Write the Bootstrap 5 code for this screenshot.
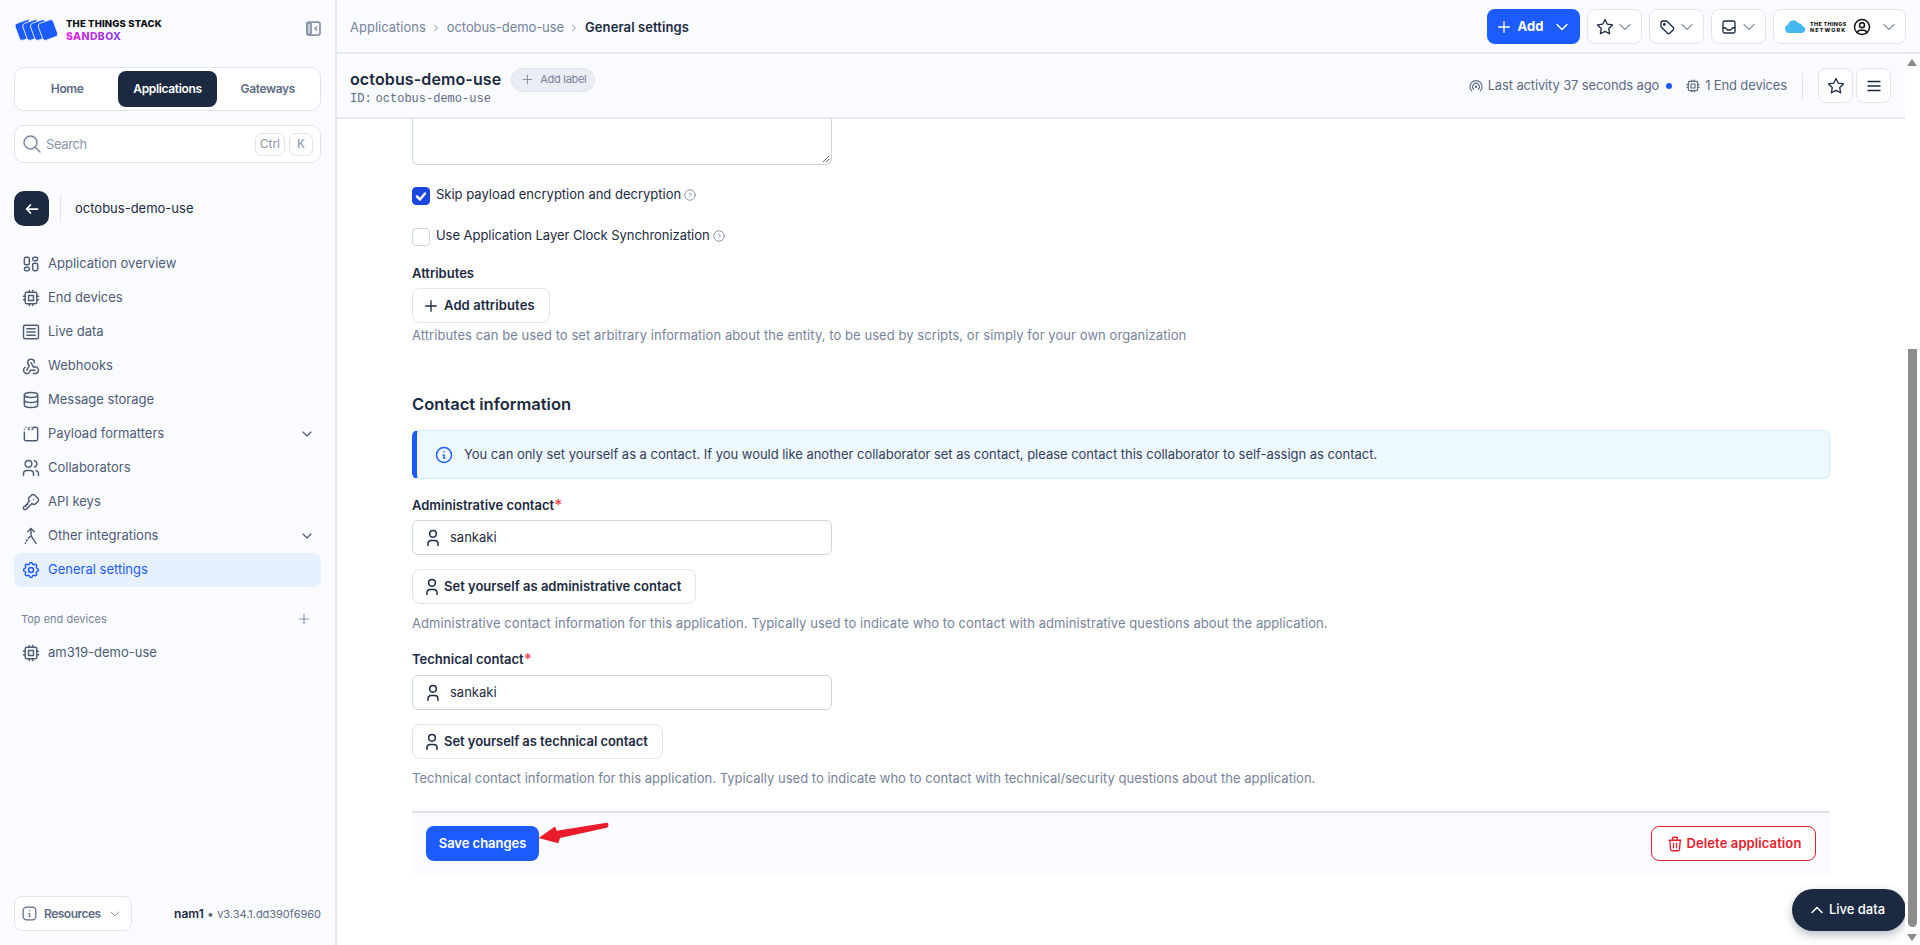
<!DOCTYPE html>
<html lang="en">
<head>
<meta charset="utf-8">
<title>General settings</title>
<link href="https://cdn.jsdelivr.net/npm/bootstrap@5.3.0/dist/css/bootstrap.min.css" rel="stylesheet">
<style>
html,body{height:945px;overflow:hidden}
body{font-family:Inter,"Liberation Sans",sans-serif;font-size:13px;color:#1c2a41;background:#fff}
svg.ic{fill:none;stroke:currentColor;stroke-width:1.75;stroke-linecap:round;stroke-linejoin:round;flex:none}
svg.ic.tts-thin{stroke-width:1.4}
.tts-shell{height:945px}
.tts-side{width:337px;flex:none;background:#fafbfe;border-right:2px solid #e6e9f0;padding:0 14px;height:945px}
.tts-brand{height:53px;padding-top:19px;margin-bottom:14px}
.tts-logo{flex:none}
.tts-brandtext{font-weight:800;font-size:9.5px;line-height:13px;letter-spacing:.17px;color:#0b0b0f;margin-left:6px;margin-top:-2px}
.tts-sandbox{display:block;background:linear-gradient(90deg,#e21be0,#3f5cf2);-webkit-background-clip:text;background-clip:text;color:transparent;font-size:10.5px;letter-spacing:.35px}
.tts-collapse{color:#8a95a8;margin-top:2px}
.tts-tabs{border:1px solid #e0e4ec;border-radius:10px;background:#fff;height:44px;padding:3px;gap:2px}
.tts-tab{flex:1 1 0;border-radius:8px;font-weight:600;font-size:12px;letter-spacing:-.35px;color:#5d6b85;text-decoration:none;display:flex;align-items:center;justify-content:center}
.tts-tab-on{background:#1c2a41;color:#fff}
.tts-search{height:38px;border:1px solid #e0e4ec;border-radius:10px;background:#fff;margin-top:14px;padding:0 7px 0 8px;color:#76839a}
.tts-searchtext{letter-spacing:-.4px;padding-top:1px;margin-left:5px;color:#8a95a8}
.tts-kbd{height:23px;border:1px solid #dfe3eb;border-radius:7px;font-size:12px;padding:0 4px;min-width:24px;display:flex;align-items:center;justify-content:center;color:#8a95a8;background:#fff}
.tts-back{width:35px;height:35px;border-radius:10px;background:#1c2a41;color:#fff;display:flex;align-items:center;justify-content:center}
.tts-appname{height:35px;margin-top:28px;margin-bottom:21px}
.tts-vr{width:1px;height:26px;background:#e0e4ec;margin:0 14px 0 11px}
.tts-link{display:flex;align-items:center;height:34px;border-radius:8px;padding:0 6px 0 7px;color:#4e5c76;text-decoration:none;gap:7px;font-size:13px}
.tts-link-on{background:#e7f0ff;color:#1c5cff}
.tts-sect{color:#76839a;font-size:11px;padding:0 9px 0 7px;margin-top:15px;height:34px}
.tts-res{height:35px;width:118px;border:1px solid #e0e4ec;border-radius:8px;background:#fff;font-weight:600;font-size:12px;letter-spacing:-.5px;gap:6px;padding:0 8px 0 6px}
.tts-foot{margin-top:auto;margin-bottom:14px;font-size:12px;color:#5d6b85}
.tts-ver{font-size:11px;letter-spacing:-.04px}
.tts-top{height:54px;background:#fafbfe;border-bottom:2px solid #e6e9f0;padding:1px 14px 0 13px}
.tts-crumbs{gap:4.5px;margin-top:2px}
.tts-crumb{color:#76839a;text-decoration:none;font-size:13px}
.tts-crumb-mid{letter-spacing:-.08px}
.tts-crumb-now{letter-spacing:.1px;font-weight:600}
.tts-tool{height:35px;width:55px;background:#fff;border:1px solid #e0e4ec;border-radius:8px;gap:1px;padding:0 0 0 8px;color:#1c2a41}
.tts-tool .tts-chev{color:#8a95a8}
.tts-ttn{width:133px;padding:0 6px 0 10px;gap:3px}
.tts-ttntext{font-weight:800;font-size:5.4px;line-height:6px;letter-spacing:.35px;color:#111;width:37px;flex:none}
.tts-ttntext span{letter-spacing:1.15px}
.tts-add{height:35px;width:93px;border-radius:8px;background:#1c5cff;color:#fff;border:0;font-weight:700;font-size:13px;gap:5px}
.tts-sub{height:65px;background:#fafbfe;border-bottom:2px solid #e6e9f0;padding:0 14px 0 13px}
.tts-title{font-size:16px;font-weight:600;letter-spacing:.12px;line-height:21px;color:#1c2a41;padding-top:1px}
.tts-idline{font-family:"Liberation Mono",monospace;font-size:12px;line-height:14px;color:#5d6b85}
.tts-pill{height:24px;width:84px;border-radius:12px;background:#eaedf3;border:1px solid #e0e4ec;color:#76839a;font-size:11px;letter-spacing:-.3px;padding:0 0 0 8px;gap:5px;margin-left:10px;margin-top:2px}
.tts-meta{color:#5d6b85;font-size:13px;letter-spacing:-.14px}
.tts-dot{width:6px;height:6px;border-radius:50%;background:#1c5cff;display:inline-block;margin:0 13px 0 7px}
.tts-sq{width:35px;height:35px;background:#fff;border:1px solid #e0e4ec;border-radius:8px;padding:0;color:#1c2a41;display:flex;align-items:center;justify-content:center}
.tts-scroll{flex:1 1 0;min-height:0;padding:0 75px;position:relative}
.tts-area{height:46px;width:420px;border:1px solid #ced4e0;border-top:0;border-radius:0 0 6px 6px;position:relative}
.tts-grip{position:absolute;right:1px;bottom:1px}
.tts-check{width:18px;height:18px;border:1px solid #ced4e0;border-radius:4px;background:#fff;flex:none;margin-right:6px;display:flex;align-items:center;justify-content:center}
.tts-check-on{background:#1c46e0;border-color:#1c46e0;color:#fff}
.tts-checkrow{height:18px;line-height:15px;color:#1c2a41}
.tts-tight{letter-spacing:-.05px}
.tts-help{color:#76839a;margin-left:2px;margin-top:1px}
.tts-lab{font-weight:600;line-height:18px;color:#1c2a41}
.tts-btn{height:35px;background:#fff;border:1px solid #e0e4ec;border-radius:8px;font-weight:600;font-size:13px;color:#1c2a41;padding:0 14px 0 9px;gap:2px}
.tts-btn-add{gap:4px;letter-spacing:.12px}
.tts-btn-tech{letter-spacing:-.05px}
.tts-desc{color:#76839a;line-height:18px;font-size:13px;letter-spacing:.066px}
.tts-desc-b{letter-spacing:.016px}
.tts-h{font-size:16.5px;font-weight:600;line-height:22px;color:#1c2a41}
.tts-note{height:49px;background:#edf8ff;border:1px solid #cfeeff;border-left:5px solid #1c5cff;border-radius:6px;padding-left:17px;gap:10px;color:#33415a;letter-spacing:-.03px}
.tts-input{width:420px;height:35px;border:1px solid #ced4e0;border-radius:6px;padding:0 10px;gap:7px;background:#fff}
.tts-req{color:#f0485a;font-size:15px;line-height:1}
.tts-bar{height:63px;background:#fafbfe;border-top:2px solid #dfe1e7;padding:0 14px;margin-top:24px}
.tts-save{height:35px;width:113px;border:0;border-radius:8px;background:#1c5cff;color:#fff;font-weight:600;font-size:13px;letter-spacing:-.04px;padding-top:2px}
.tts-del{height:35px;width:165px;background:#fff;border:1px solid #e4202c;border-radius:8px;color:#e4202c;font-weight:600;font-size:13px;letter-spacing:.1px;gap:3px}
.tts-arrow{position:absolute;left:201px;top:703px}
.tts-live{position:absolute;right:-1px;bottom:14px;height:42px;width:114px;border:0;border-radius:21px;background:#1c2a41;color:#fff;font-size:13px;font-weight:500;gap:2px;padding:0 6px 0 0;box-shadow:0 4px 10px rgba(28,42,65,.3)}
.tts-bartrack{width:15px;flex:none;background:#fff;position:relative}
.tts-thumb{position:absolute;left:3px;width:9px;top:295px;height:578px;background:#8c8c8c;border-radius:0 0 5px 5px}
.tts-up,.tts-down{position:absolute;left:2px;width:0;height:0;border-left:5.5px solid transparent;border-right:5.5px solid transparent}
.tts-up{top:5px;border-bottom:7px solid #8c8c8c}
.tts-down{bottom:4px;border-top:7px solid #8c8c8c}
</style>
</head>
<body>
<svg width="0" height="0" class="position-absolute">
<defs>
<symbol id="i-cpu" viewBox="0 0 24 24"><rect x="5" y="5" width="14" height="14" rx="2"/><rect x="9" y="9" width="6" height="6"/><path d="M3 10h2M3 14h2M10 3v2M14 3v2M21 10h-2M21 14h-2M14 21v-2M10 21v-2"/></symbol>
<symbol id="i-layout" viewBox="0 0 24 24"><rect x="4" y="4" width="6" height="9" rx="2"/><rect x="4" y="16" width="6" height="4" rx="2"/><rect x="14" y="4" width="6" height="4" rx="2"/><rect x="14" y="11" width="6" height="9" rx="2"/></symbol>
<symbol id="i-article" viewBox="0 0 24 24"><rect x="3" y="4" width="18" height="16" rx="2"/><path d="M7 8h10M7 12h10M7 16h10"/></symbol>
<symbol id="i-hook" viewBox="0 0 24 24"><path d="M4.876 13.61a4 4 0 1 0 6.124 3.39h6"/><path d="M15.066 20.502a4 4 0 1 0 1.934 -7.502c-.706 0 -1.424 .179 -2 .5l-3 -5.5"/><path d="M16 8a4 4 0 1 0 -8 0c0 1.506 .77 2.818 2 3.5l-3 5.5"/></symbol>
<symbol id="i-db" viewBox="0 0 24 24"><ellipse cx="12" cy="6" rx="8" ry="3"/><path d="M4 6v6a8 3 0 0 0 16 0v-6"/><path d="M4 12v6a8 3 0 0 0 16 0v-6"/></symbol>
<symbol id="i-code" viewBox="0 0 24 24"><path d="M4 10v8a2 2 0 0 0 2 2h12a2 2 0 0 0 2 -2v-12a2 2 0 0 0 -2 -2h-3"/><path d="M6 4h-.01M4 6.500h-.01"/><path d="M10 4l-1.500 1.500l1.500 1.500M13 4l1.500 1.500l-1.500 1.500" stroke-width="1.400"/></symbol>
<symbol id="i-users" viewBox="0 0 24 24"><circle cx="9" cy="7" r="4"/><path d="M3 21v-2a4 4 0 0 1 4 -4h4a4 4 0 0 1 4 4v2"/><path d="M16 3.130a4 4 0 0 1 0 7.750"/><path d="M21 21v-2a4 4 0 0 0 -3 -3.850"/></symbol>
<symbol id="i-key" viewBox="0 0 24 24"><path d="M16.555 3.843l3.602 3.602a2.877 2.877 0 0 1 0 4.069l-2.643 2.643a2.877 2.877 0 0 1 -4.069 0l-.301 -.301l-6.558 6.558a2 2 0 0 1 -1.239 .578l-.175 .008h-1.172a1 1 0 0 1 -.993 -.883l-.007 -.117v-1.172a2 2 0 0 1 .467 -1.284l.119 -.13l.414 -.414h2v-2h2v-2l2.144 -2.144l-.301 -.301a2.877 2.877 0 0 1 0 -4.069l2.643 -2.643a2.877 2.877 0 0 1 4.069 0z"/><path d="M15 9h.01"/></symbol>
<symbol id="i-merge" viewBox="0 0 24 24"><path d="M8 7l4 -4l4 4"/><path d="M12 3v7c0 4 4 6 6 11"/><path d="M11 12.500l-2 2M7.500 16.500l-1 1.500M5.500 20.500l-.2 .5"/></symbol>
<symbol id="i-gear" viewBox="0 0 24 24"><path d="M10.325 4.317c.426 -1.756 2.924 -1.756 3.35 0a1.724 1.724 0 0 0 2.573 1.066c1.543 -.94 3.31 .826 2.37 2.37a1.724 1.724 0 0 0 1.065 2.572c1.756 .426 1.756 2.924 0 3.35a1.724 1.724 0 0 0 -1.066 2.573c.94 1.543 -.826 3.31 -2.37 2.37a1.724 1.724 0 0 0 -2.572 1.065c-.426 1.756 -2.924 1.756 -3.35 0a1.724 1.724 0 0 0 -2.573 -1.066c-1.543 .94 -3.31 -.826 -2.37 -2.37a1.724 1.724 0 0 0 -1.065 -2.572c-1.756 -.426 -1.756 -2.924 0 -3.35a1.724 1.724 0 0 0 1.066 -2.573c-.94 -1.543 .826 -3.31 2.37 -2.37c1 .608 2.296 .07 2.572 -1.065z"/><circle cx="12" cy="12" r="3"/></symbol>
<symbol id="i-chev" viewBox="0 0 24 24"><path d="M6 9l6 6l6 -6"/></symbol>
<symbol id="i-chevr" viewBox="0 0 24 24"><path d="M9 6l6 6l-6 6"/></symbol>
<symbol id="i-chevu" viewBox="0 0 24 24"><path d="M6 15l6 -6l6 6"/></symbol>
<symbol id="i-plus" viewBox="0 0 24 24"><path d="M12 5v14M5 12h14"/></symbol>
<symbol id="i-star" viewBox="0 0 24 24"><path d="M12 17.750l-6.172 3.245l1.179 -6.873l-5 -4.867l6.900 -1l3.086 -6.253l3.086 6.253l6.900 1l-5 4.867l1.179 6.873z"/></symbol>
<symbol id="i-tag" viewBox="0 0 24 24"><circle cx="8.500" cy="8.500" r="1"/><path d="M4 7v3.859c0 .537 .213 1.052 .593 1.432l8.116 8.116a2.025 2.025 0 0 0 2.864 0l4.834 -4.834a2.025 2.025 0 0 0 0 -2.864l-8.117 -8.116a2.025 2.025 0 0 0 -1.431 -.593h-3.859a3 3 0 0 0 -3 3z"/></symbol>
<symbol id="i-inbox" viewBox="0 0 24 24"><rect x="4" y="4" width="16" height="16" rx="2"/><path d="M4 13h3l3 3h4l3 -3h3"/></symbol>
<symbol id="i-userc" viewBox="0 0 24 24"><circle cx="12" cy="12" r="9"/><circle cx="12" cy="10" r="3"/><path d="M6.168 18.849a4 4 0 0 1 3.832 -2.849h4a4 4 0 0 1 3.834 2.855"/></symbol>
<symbol id="i-user" viewBox="0 0 24 24"><circle cx="12" cy="7" r="4"/><path d="M6 21v-2a4 4 0 0 1 4 -4h4a4 4 0 0 1 4 4v2"/></symbol>
<symbol id="i-help" viewBox="0 0 24 24"><circle cx="12" cy="12" r="9"/><path d="M12 16v.01M12 13a2 2 0 0 0 .914 -3.782a1.980 1.980 0 0 0 -2.414 .483"/></symbol>
<symbol id="i-info" viewBox="0 0 24 24"><circle cx="12" cy="12" r="9"/><path d="M12 8h.01M11 12h1v4h1"/></symbol>
<symbol id="i-infosq" viewBox="0 0 24 24"><rect x="3" y="3" width="18" height="18" rx="5"/><path d="M12 8h.01M11 12h1v4h1"/></symbol>
<symbol id="i-trash" viewBox="0 0 24 24"><path d="M4 7h16M10 11v6M14 11v6M5 7l1 12a2 2 0 0 0 2 2h8a2 2 0 0 0 2 -2l1 -12M9 7v-3a1 1 0 0 1 1 -1h4a1 1 0 0 1 1 1v3"/></symbol>
<symbol id="i-menu" viewBox="0 0 24 24"><path d="M4 6h16M4 12h16M4 18h16"/></symbol>
<symbol id="i-signal" viewBox="0 0 24 24"><path d="M18.364 19.364a9 9 0 1 0 -12.728 0"/><path d="M15.536 16.536a5 5 0 1 0 -7.072 0"/><circle cx="12" cy="13" r="1"/></symbol>
</defs>
</svg>

<div class="tts-shell d-flex">
  <aside class="tts-side d-flex flex-column">
    <div class="tts-brand d-flex align-items-start justify-content-between">
      <div class="d-flex align-items-start">
        <svg class="tts-logo" width="46" height="22" viewBox="0 0 46 22"><g fill="#1c5cff" stroke="#fafbfe" stroke-width=".8"><rect x="2.800" y="2" width="16" height="18" rx="3" transform="rotate(-20 10.800 11)"/><rect x="10.500" y="2" width="16" height="18" rx="3" transform="rotate(-20 18.500 11)"/><rect x="18.200" y="2" width="16" height="18" rx="3" transform="rotate(-20 26.200 11)"/><rect x="26" y="2" width="16" height="18" rx="3" transform="rotate(-20 34 11)"/></g></svg>
        <div class="tts-brandtext">THE THINGS STACK<span class="tts-sandbox">SANDBOX</span></div>
      </div>
      <svg class="ic tts-collapse" width="15" height="15" viewBox="0 0 15 15"><rect x="1" y="1" width="13" height="13" rx="2"/><path d="M1 2h4v11h-4z" fill="currentColor" fill-opacity=".4"/><path d="M10.500 6l-1.500 1.500l1.500 1.500"/></svg>
    </div>
    <nav class="tts-tabs d-flex">
      <a class="tts-tab" href="#">Home</a><a class="tts-tab tts-tab-on" href="#">Applications</a><a class="tts-tab" href="#">Gateways</a>
    </nav>
    <div class="tts-search d-flex align-items-center">
      <svg class="ic tts-thin" width="18" height="18" viewBox="0 0 18 18"><circle cx="7.500" cy="7.500" r="6.500"/><path d="M12.500 12.500l4.500 4.500"/></svg>
      <span class="tts-searchtext flex-grow-1">Search</span>
      <span class="tts-kbd me-1">Ctrl</span><span class="tts-kbd">K</span>
    </div>
    <div class="tts-appname d-flex align-items-center">
      <span class="tts-back"><svg class="ic" width="16" height="16" viewBox="0 0 16 16"><path d="M2.500 8h11M2.500 8l4 -4M2.500 8l4 4"/></svg></span>
      <span class="tts-vr"></span>
      <span>octobus-demo-use</span>
    </div>
    <a class="tts-link" href="#"><svg class="ic" width="20" height="20"><use href="#i-layout"/></svg>Application overview</a>
    <a class="tts-link" href="#"><svg class="ic" width="20" height="20"><use href="#i-cpu"/></svg>End devices</a>
    <a class="tts-link" href="#"><svg class="ic" width="20" height="20"><use href="#i-article"/></svg>Live data</a>
    <a class="tts-link" href="#"><svg class="ic" width="20" height="20"><use href="#i-hook"/></svg>Webhooks</a>
    <a class="tts-link" href="#"><svg class="ic" width="20" height="20"><use href="#i-db"/></svg>Message storage</a>
    <a class="tts-link" href="#"><svg class="ic" width="20" height="20"><use href="#i-code"/></svg>Payload formatters<svg class="ic ms-auto" width="16" height="16"><use href="#i-chev"/></svg></a>
    <a class="tts-link" href="#"><svg class="ic" width="20" height="20"><use href="#i-users"/></svg>Collaborators</a>
    <a class="tts-link" href="#"><svg class="ic" width="20" height="20"><use href="#i-key"/></svg>API keys</a>
    <a class="tts-link" href="#"><svg class="ic" width="20" height="20"><use href="#i-merge"/></svg>Other integrations<svg class="ic ms-auto" width="16" height="16"><use href="#i-chev"/></svg></a>
    <a class="tts-link tts-link-on" href="#"><svg class="ic" width="20" height="20"><use href="#i-gear"/></svg>General settings</a>
    <div class="tts-sect d-flex align-items-center justify-content-between"><span>Top end devices</span><svg class="ic" width="16" height="16" style="color:#8a95a8"><use href="#i-plus"/></svg></div>
    <a class="tts-link" href="#"><svg class="ic" width="20" height="20"><use href="#i-cpu"/></svg>am319-demo-use</a>
    <div class="tts-foot d-flex align-items-center justify-content-between">
      <div class="tts-res d-flex align-items-center"><svg class="ic" width="17" height="17"><use href="#i-infosq"/></svg>Resources<svg class="ic tts-thin ms-auto" width="16" height="16" style="color:#8a95a8"><use href="#i-chev"/></svg></div>
      <div><b style="color:#1c2a41;font-weight:600">nam1</b> • <span class="tts-ver">v3.34.1.dd390f6960</span></div>
    </div>
  </aside>

  <div class="flex-grow-1 d-flex flex-column" style="min-width:0">
    <header class="tts-top d-flex align-items-center justify-content-between">
      <div class="tts-crumbs d-flex align-items-center">
        <a class="tts-crumb" href="#">Applications</a><svg class="ic" width="12" height="12" style="color:#76839a"><use href="#i-chevr"/></svg>
        <a class="tts-crumb tts-crumb-mid" href="#">octobus-demo-use</a><svg class="ic" width="12" height="12" style="color:#76839a"><use href="#i-chevr"/></svg>
        <span class="tts-crumb-now">General settings</span>
      </div>
      <div class="d-flex align-items-center" style="gap:7px">
        <button class="tts-add d-flex align-items-center justify-content-center"><svg class="ic" width="18" height="18"><use href="#i-plus"/></svg>Add<svg class="ic ms-1" width="20" height="20"><use href="#i-chev"/></svg></button>
        <div class="tts-tool d-flex align-items-center"><svg class="ic" width="18" height="18"><use href="#i-star"/></svg><svg class="ic tts-thin tts-chev" width="20" height="20"><use href="#i-chev"/></svg></div>
        <div class="tts-tool d-flex align-items-center"><svg class="ic" width="18" height="18"><use href="#i-tag"/></svg><svg class="ic tts-thin tts-chev" width="20" height="20"><use href="#i-chev"/></svg></div>
        <div class="tts-tool d-flex align-items-center"><svg class="ic" width="18" height="18"><use href="#i-inbox"/></svg><svg class="ic tts-thin tts-chev" width="20" height="20"><use href="#i-chev"/></svg></div>
        <div class="tts-tool tts-ttn d-flex align-items-center">
          <svg width="23" height="13" viewBox="0 0 24 14"><path fill="#45b8f2" d="M5 14a4.500 4.500 0 0 1 -1 -8.800a6 6 0 0 1 11 -2a5 5 0 0 1 4.500 3a4 4 0 0 1 -.5 7.800z"/></svg>
          <span class="tts-ttntext">THE THINGS<br><span>NETWORK</span></span>
          <svg class="ic ms-auto" width="20" height="20" style="color:#111"><use href="#i-userc"/></svg><svg class="ic tts-thin tts-chev" style="margin-left:4px" width="20" height="20"><use href="#i-chev"/></svg>
        </div>
      </div>
    </header>

    <div class="flex-grow-1 d-flex" style="min-height:0">
      <div class="flex-grow-1 d-flex flex-column" style="min-width:0">
        <section class="tts-sub d-flex align-items-center justify-content-between">
          <div>
            <div class="d-flex align-items-center"><span class="tts-title">octobus-demo-use</span><span class="tts-pill d-flex align-items-center"><svg class="ic tts-thin" width="15" height="15"><use href="#i-plus"/></svg>Add label</span></div>
            <div class="tts-idline">ID:<span class="ms-1">octobus-demo-use</span></div>
          </div>
          <div class="d-flex align-items-center tts-meta">
            <svg class="ic me-1" width="16" height="16"><use href="#i-signal"/></svg>Last activity 37 seconds ago<span class="tts-dot"></span>
            <svg class="ic me-1" width="16" height="16"><use href="#i-cpu"/></svg>1 End devices
            <span class="tts-vr" style="margin:0 15px"></span>
            <span class="d-flex" style="gap:3px">
              <button class="tts-sq"><svg class="ic" width="18" height="18"><use href="#i-star"/></svg></button>
              <button class="tts-sq"><svg class="ic" width="18" height="18"><use href="#i-menu"/></svg></button>
            </span>
          </div>
        </section>

        <main class="tts-scroll">
          <div class="tts-area"><svg class="tts-grip" width="9" height="9" viewBox="0 0 9 9"><path d="M8 2l-6 6M8 5l-3 3" stroke="#666" fill="none"/></svg></div>
          <div class="tts-checkrow d-flex align-items-start" style="margin-top:22px"><span class="tts-check tts-check-on"><svg class="ic" width="12" height="12" viewBox="0 0 12 12" style="stroke-width:2.500"><path d="M2 6.500l3 3l5 -6"/></svg></span>Skip payload encryption and decryption<svg class="ic tts-thin tts-help" width="14" height="14"><use href="#i-help"/></svg></div>
          <div class="tts-checkrow tts-tight d-flex align-items-start" style="margin-top:23px"><span class="tts-check"></span>Use Application Layer Clock Synchronization<svg class="ic tts-thin tts-help" width="14" height="14"><use href="#i-help"/></svg></div>
          <div class="tts-lab" style="margin-top:18px">Attributes</div>
          <button class="tts-btn tts-btn-add d-flex align-items-center" style="margin-top:6px"><svg class="ic" width="18" height="18"><use href="#i-plus"/></svg>Add attributes</button>
          <div class="tts-desc" style="margin-top:3px">Attributes can be used to set arbitrary information about the entity, to be used by scripts, or simply for your own organization</div>
          <div class="tts-h" style="margin-top:49px">Contact information</div>
          <div class="tts-note d-flex align-items-center" style="margin-top:15px"><svg class="ic" width="20" height="20" style="color:#1c5cff"><use href="#i-info"/></svg>You can only set yourself as a contact. If you would like another collaborator set as contact, please contact this collaborator to self-assign as contact.</div>
          <div class="tts-lab" style="margin-top:17px">Administrative contact<span class="tts-req">*</span></div>
          <div class="tts-input d-flex align-items-center" style="margin-top:6px"><svg class="ic" width="20" height="20"><use href="#i-user"/></svg>sankaki</div>
          <button class="tts-btn d-flex align-items-center" style="margin-top:14px"><svg class="ic" width="20" height="20"><use href="#i-user"/></svg>Set yourself as administrative contact</button>
          <div class="tts-desc" style="margin-top:10px">Administrative contact information for this application. Typically used to indicate who to contact with administrative questions about the application.</div>
          <div class="tts-lab" style="margin-top:18px">Technical contact<span class="tts-req">*</span></div>
          <div class="tts-input d-flex align-items-center" style="margin-top:7px"><svg class="ic" width="20" height="20"><use href="#i-user"/></svg>sankaki</div>
          <button class="tts-btn tts-btn-tech d-flex align-items-center" style="margin-top:14px"><svg class="ic" width="20" height="20"><use href="#i-user"/></svg>Set yourself as technical contact</button>
          <div class="tts-desc tts-desc-b" style="margin-top:10px">Technical contact information for this application. Typically used to indicate who to contact with technical/security questions about the application.</div>
          <div class="tts-bar d-flex align-items-center justify-content-between">
            <button class="tts-save">Save changes</button>
            <button class="tts-del d-flex align-items-center justify-content-center"><svg class="ic" width="18" height="18"><use href="#i-trash"/></svg>Delete application</button>
          </div>
          <svg class="tts-arrow" width="72" height="24" viewBox="0 0 72 24"><path fill="#ea1c2c" d="M.5 16L17 4.500L18.700 8.700L68.700 .7C70.500 .5 71.500 4.500 68.700 5.700L22 16L20.300 21.300z"/></svg>
          <button class="tts-live d-flex align-items-center justify-content-center"><svg class="ic" width="20" height="20"><use href="#i-chevu"/></svg>Live data</button>
        </main>
      </div>
      <div class="tts-bartrack"><span class="tts-up"></span><span class="tts-thumb"></span><span class="tts-down"></span></div>
    </div>
  </div>
</div>
<script src="https://cdn.jsdelivr.net/npm/bootstrap@5.3.0/dist/js/bootstrap.bundle.min.js"></script>
</body>
</html>
